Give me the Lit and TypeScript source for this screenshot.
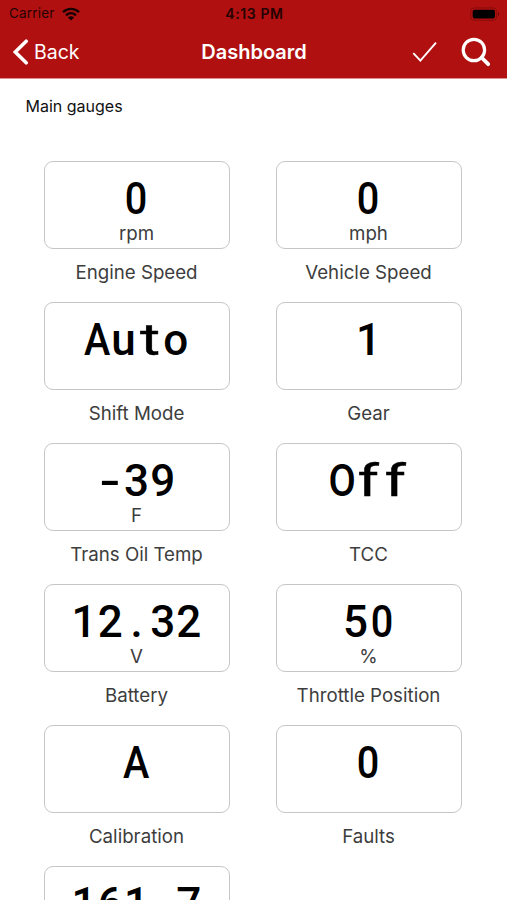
import { LitElement, html, css, nothing } from "lit";
import { customElement, property } from "lit/decorators.js";
import { classMap } from "lit/directives/class-map.js";

interface Gauge {
  label: string;
  value: string;
  unit?: string;
}

const GAUGES: Gauge[] = [
  { label: "Engine Speed", value: "0", unit: "rpm" },
  { label: "Vehicle Speed", value: "0", unit: "mph" },
  { label: "Shift Mode", value: "Auto" },
  { label: "Gear", value: "1" },
  { label: "Trans Oil Temp", value: "-39", unit: "F" },
  { label: "TCC", value: "Off" },
  { label: "Battery", value: "12.32", unit: "V" },
  { label: "Throttle Position", value: "50", unit: "%" },
  { label: "Calibration", value: "A" },
  { label: "Faults", value: "0" },
  { label: "", value: "161.7" },
];

@customElement("gauge-tile")
export class GaugeTile extends LitElement {
  @property({ attribute: false }) gauge!: Gauge;

  static styles = css`
    :host {
      display: block;
      height: 141px;
      text-align: center;
      color: #3d3d3d;
      font: 400 18.7px/22px Inter, sans-serif;
    }
    .box {
      box-sizing: border-box;
      height: 88px;
      border: 1px solid #c6c6c6;
      border-radius: 9px;
      padding-top: 14px;
    }
    .value {
      display: flex;
      justify-content: center;
      height: 47px;
      color: #000;
      font: 500 44px/46px Roboto, sans-serif;
    }
    /* Every character sits in a cell of equal width. */
    .char {
      width: 26.2px;
      display: flex;
      justify-content: center;
    }
    .narrow {
      transform: scaleX(0.9);
    }
    .wide {
      font-weight: 400;
      transform: scaleX(1.4);
      -webkit-text-stroke: 0.4px #000;
    }
    .dash {
      transform: scaleX(1.4);
    }
    .label {
      margin-top: 13px;
    }
  `;

  render() {
    const g = this.gauge;
    return html`
      <div class="box">
        <div class="value">${[...g.value].map(
          (c) =>
            html`<span
              class=${classMap({
                char: true,
                narrow: "0AO".includes(c),
                wide: "ft".includes(c),
                dash: c === "-",
              })}
              >${c}</span
            >`
        )}</div>
        ${g.unit ? html`<div class="unit">${g.unit}</div>` : nothing}
      </div>
      <div class="label">${g.label}</div>
    `;
  }
}

@customElement("app-root")
export class AppRoot extends LitElement {
  static styles = css`
    :host {
      display: block;
      height: 900px;
      overflow: hidden;
      background: #fff;
      font-family: Inter, sans-serif;
    }
    .header {
      box-sizing: border-box;
      height: 79px;
      background: #b01110;
      border-bottom: 1px solid #dc9190;
    }
    .status {
      display: grid;
      grid-template-columns: 1fr auto 1fr;
      align-items: center;
      height: 27px;
      padding: 0 7px 0 9px;
      color: #250303;
      font-size: 13.5px;
      line-height: 27px;
    }
    .carrier {
      display: flex;
      align-items: center;
      gap: 7px;
      letter-spacing: 0.2px;
    }
    .time {
      font-weight: 600;
      font-size: 14px;
      letter-spacing: 0.6px;
    }
    .battery {
      justify-self: end;
    }
    .nav {
      display: grid;
      grid-template-columns: 1fr auto 1fr;
      align-items: center;
      height: 50px;
      padding: 0 12px 0 13px;
      color: #fff;
    }
    .back {
      display: flex;
      align-items: center;
      gap: 5px;
      font-size: 19.5px;
    }
    .title {
      font-size: 20px;
      font-weight: 600;
    }
    .actions {
      display: flex;
      align-items: center;
      justify-content: flex-end;
      gap: 24px;
      margin-right: 4px;
    }
    svg {
      display: block;
    }
    .section {
      padding: 16px 0 0 25.5px;
      height: 66px;
      color: #111;
      font-size: 16px;
      line-height: 22px;
    }
    .grid {
      display: grid;
      grid-template-columns: 186px 186px;
      column-gap: 46px;
      padding-left: 43.5px;
    }
  `;

  render() {
    return html`
      <div class="header">
        <div class="status">
          <div class="carrier">
            <span>Carrier</span>
            <svg width="18" height="14" viewBox="0 0 18 14">
              <g fill="none" stroke="#160202" stroke-width="2.4">
                <path d="M1 5.2C5.5.7 12.5.7 17 5.2" />
                <path d="M4 8.3c2.9-2.8 7.1-2.8 10 0" />
              </g>
              <path d="M9 13.5 5.9 10.4c1.7-1.6 4.5-1.6 6.2 0z" fill="#160202" />
            </svg>
          </div>
          <span class="time">4:13 PM</span>
          <svg class="battery" width="30" height="14" viewBox="0 0 30 14">
            <rect x=".7" y=".9" width="26" height="12.4" rx="3.5" fill="none" stroke="#8a0b0b" />
            <rect x="2.7" y="2.8" width="22.3" height="8.6" rx="1.8" fill="#000" />
            <path d="M28 5c1.6.6 1.6 3.6 0 4.2z" fill="#6d0909" />
          </svg>
        </div>
        <div class="nav">
          <div class="back">
            <svg width="16" height="26" viewBox="0 0 16 26">
              <path d="M13.2 2.2 2.2 13l11 10.8" fill="none" stroke="#fff" stroke-width="3.6" stroke-linecap="round" />
            </svg>
            <span>Back</span>
          </div>
          <span class="title">Dashboard</span>
          <div class="actions">
            <svg width="25" height="22" viewBox="0 0 25 22">
              <path d="M1.3 12.2 8.4 19.7 24 1.7" fill="none" stroke="#fff" stroke-width="1.9" />
            </svg>
            <svg width="30" height="30" viewBox="0 0 30 30">
              <circle cx="12.9" cy="13" r="10.7" fill="none" stroke="#fff" stroke-width="3.2" />
              <path d="m20.5 20.5 6.7 6.7" stroke="#fff" stroke-width="3.8" stroke-linecap="round" />
            </svg>
          </div>
        </div>
      </div>
      <div class="section">Main gauges</div>
      <div class="grid">
        ${GAUGES.map((g) => html`<gauge-tile .gauge=${g}></gauge-tile>`)}
      </div>
    `;
  }
}
